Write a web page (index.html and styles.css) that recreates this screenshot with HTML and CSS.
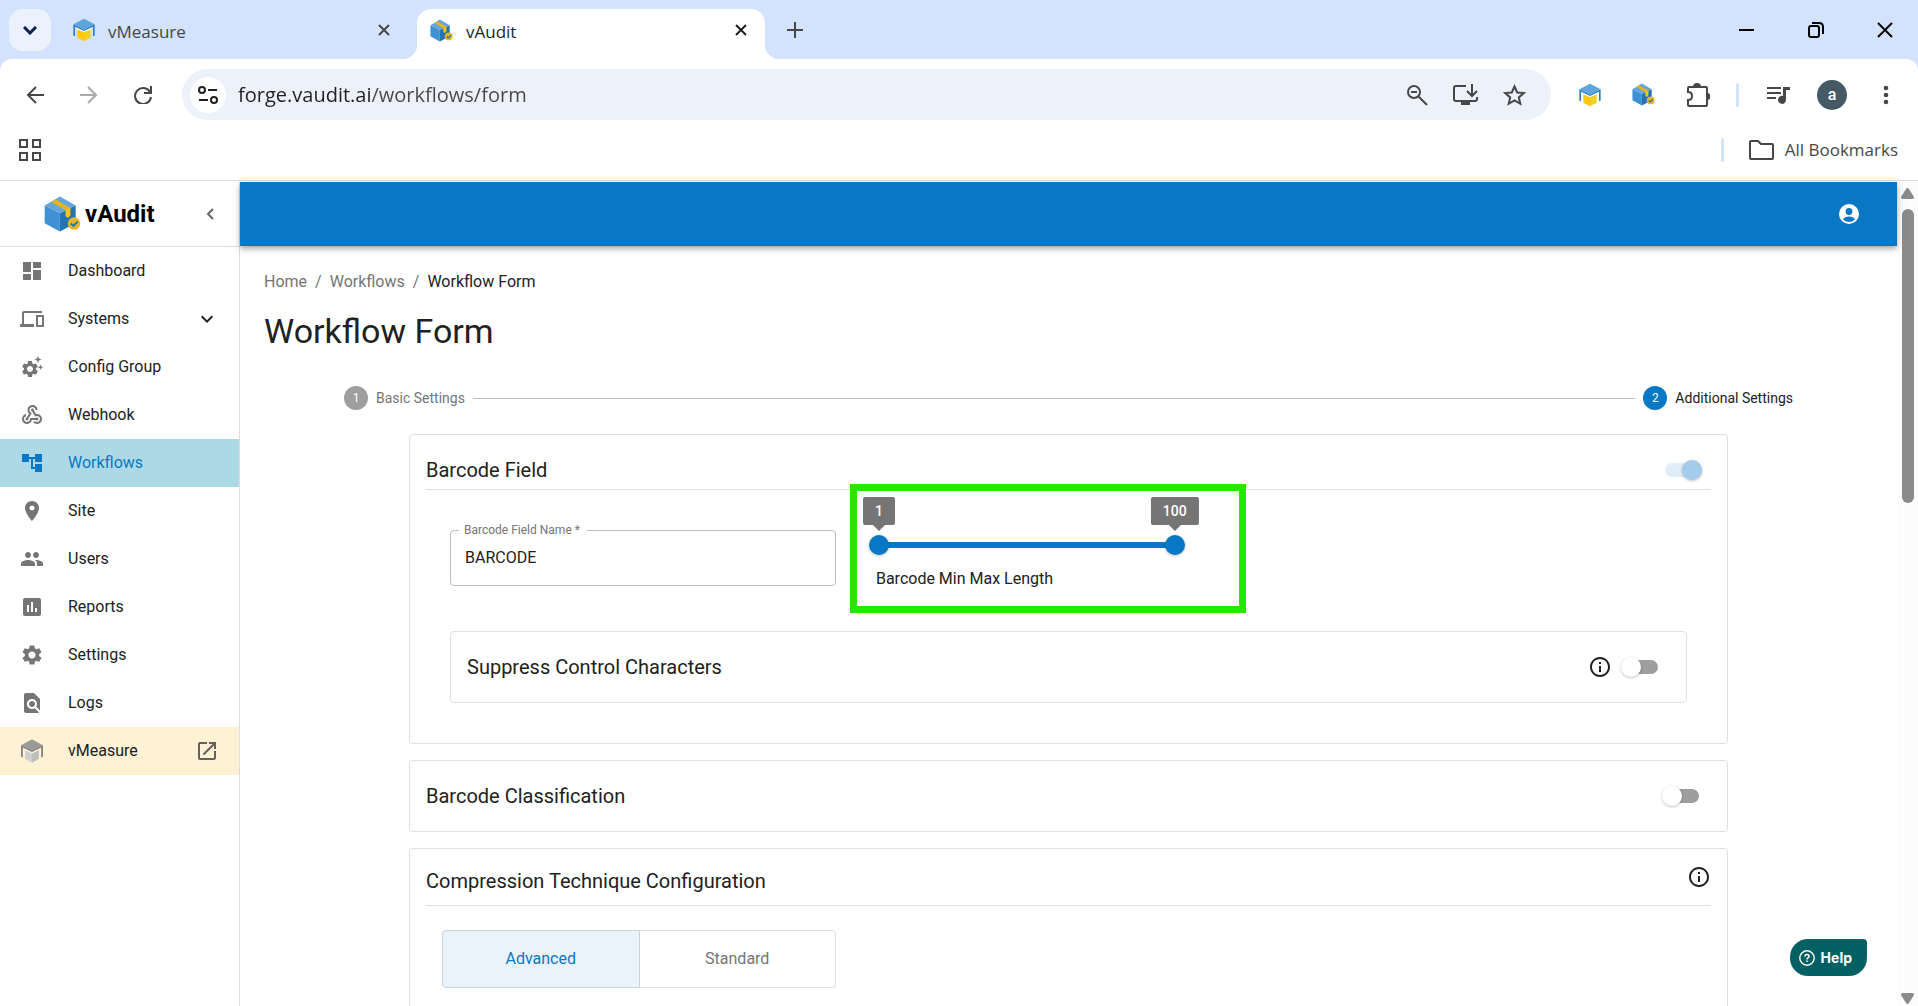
FILE: index.html
```html
<!DOCTYPE html>
<html lang="en">
<head>
<meta charset="utf-8">
<title>vAudit</title>
<link rel="stylesheet" href="styles.css">
</head>
<body>
<svg class="sprite" aria-hidden="true">
  <symbol id="logo-measure" viewBox="0 0 66 70">
    <path fill="#fff" d="M12 29h42v6L33 44 12 36z"/>
    <path fill="#2f80c3" d="M1 18l32 15 32-15v34l-5 2V25L33 38 6 25v29l-5-2z"/>
    <path fill="#5fa5dc" d="M33 1 65 18 33 35 1 18z"/>
    <path fill="#fcc90f" d="M13 33l20 9v27L13 58z"/>
    <path fill="#f0d21c" d="M53 33l-20 9v27l20-11z"/>
  </symbol>
  <symbol id="logo-measure-gray" viewBox="0 0 66 70">
    <path fill="#7d7d7d" d="M1 18l32 15 32-15v34l-5 2V25L33 38 6 25v29l-5-2z"/>
    <path fill="#9a9a9a" d="M33 1 65 18 33 35 1 18z"/>
    <path fill="#cfcfcf" d="M13 33l20 9v27L13 58z"/>
    <path fill="#bdbdbd" d="M53 33l-20 9v27l20-11z"/>
  </symbol>
  <symbol id="logo-audit" viewBox="0 0 112 108">
    <path fill="#62a6dd" d="M48 1l48 27-48 24L2 28z"/>
    <path fill="#4090d4" d="M2 28l46 24v55L2 82z"/>
    <path fill="#2373b5" d="M96 28 48 52v55l48-25z"/>
    <path fill="#e3b325" d="M35 9 21 17l44 26 15-7z"/>
    <path fill="#f8c50e" d="M65 43l15-8v23l-7 8-8-5z"/>
    <circle cx="91" cy="83" r="19" fill="#e7b725"/>
    <path fill="none" stroke="#2373b5" stroke-width="6" d="M81 83l8 7 13-13"/>
  </symbol>
  <symbol id="close" viewBox="0 0 12 12"><path fill="none" stroke="currentColor" stroke-width="2" d="M1 1l10 10M11 1 1 11"/></symbol>
  <symbol id="info" viewBox="0 0 24 24"><path fill="currentColor" d="M11 7h2v2h-2zm0 4h2v6h-2zm1-9C6.480 2 2 6.480 2 12s4.480 10 10 10 10-4.480 10-10S17.520 2 12 2zm0 18c-4.410 0-8-3.590-8-8s3.590-8 8-8 8 3.590 8 8-3.590 8-8 8z"/></symbol>
  <symbol id="gear" viewBox="0 0 24 24"><path fill="currentColor" d="M19.140 12.940c.04-.3.06-.61.06-.94 0-.32-.02-.64-.07-.94l2.030-1.580c.18-.14.23-.41.12-.61l-1.920-3.320c-.12-.22-.37-.29-.59-.22l-2.390.96c-.5-.38-1.030-.7-1.620-.94l-.36-2.540c-.04-.24-.24-.41-.48-.41h-3.840c-.24 0-.43.17-.47.41l-.36 2.540c-.59.24-1.130.57-1.620.94l-2.390-.96c-.22-.08-.47 0-.59.22L2.740 8.870c-.12.21-.08.47.12.61l2.030 1.580c-.05.3-.09.63-.09.94s.02.64.07.94l-2.030 1.580c-.18.14-.23.41-.12.61l1.920 3.320c.12.22.37.29.59.22l2.390-.96c.5.38 1.030.7 1.620.94l.36 2.540c.05.24.24.41.48.41h3.840c.24 0 .44-.17.47-.41l.36-2.540c.59-.24 1.130-.56 1.620-.94l2.390.96c.22.08.47 0 .59-.22l1.920-3.320c.12-.22.07-.47-.12-.61l-2.010-1.580zM12 15.600c-1.980 0-3.600-1.620-3.600-3.600s1.620-3.600 3.600-3.600 3.600 1.620 3.600 3.600-1.620 3.600-3.600 3.600z"/></symbol>
</svg>

<header class="browser">
  <div class="tabstrip">
    <button class="tab-search" aria-label="Search tabs"><svg width="14" height="9" viewBox="0 0 14 9"><path fill="none" stroke="#0b1f4b" stroke-width="3" d="M1 1l6 6 6-6"/></svg></button>
    <div class="tab">
      <svg width="22" height="24"><use href="#logo-measure"/></svg>
      <span class="tab-title">vMeasure</span>
      <button class="plain" aria-label="Close vMeasure"><svg width="12" height="12"><use href="#close"/></svg></button>
    </div>
    <div class="tab tab-active">
      <svg width="23" height="23"><use href="#logo-audit"/></svg>
      <span class="tab-title">vAudit</span>
      <button class="plain" aria-label="Close vAudit"><svg width="12" height="12"><use href="#close"/></svg></button>
    </div>
    <button class="plain new-tab" aria-label="New tab"><svg width="16" height="16" viewBox="0 0 16 16"><path stroke="#474747" stroke-width="2" d="M8 0v16M0 8h16"/></svg></button>
    <div class="window-controls">
      <button class="plain" aria-label="Minimize"><svg width="16" height="16" viewBox="0 0 16 16"><path stroke="#000" stroke-width="2" d="M0 8h15"/></svg></button>
      <button class="plain" aria-label="Restore"><svg width="16" height="16" viewBox="0 0 16 16"><g fill="none" stroke="#000" stroke-width="2"><rect x="1" y="4" width="10" height="11" rx="2"/><path d="M4 1h7q4 0 4 4v7"/></g></svg></button>
      <button class="plain" aria-label="Close"><svg width="16" height="16" viewBox="0 0 16 16"><path stroke="#000" stroke-width="2" d="M1 1l14 14M15 1 1 15"/></svg></button>
    </div>
  </div>

  <div class="toolbar">
    <div class="nav-buttons">
      <button class="plain" aria-label="Back"><svg width="18" height="18" viewBox="0 0 18 18"><path fill="none" stroke="#474747" stroke-width="2" d="M18 9H2M10 1 2 9l8 8"/></svg></button>
      <button class="plain" aria-label="Forward"><svg width="18" height="18" viewBox="0 0 18 18"><path fill="none" stroke="#a9a9a9" stroke-width="2" d="M0 9h16M8 1l8 8-8 8"/></svg></button>
      <button class="plain" aria-label="Reload"><svg width="18" height="18" viewBox="0 0 18 18"><path fill="none" stroke="#474747" stroke-width="2" d="M17 0v7h-7M16 6A8 8 0 1 0 17 11"/></svg></button>
    </div>
    <div class="address">
      <button class="site-info" aria-label="Site information"><svg width="20" height="18" viewBox="0 0 20 18"><g fill="none" stroke="#1f1f1f" stroke-width="2"><circle cx="4" cy="4" r="3"/><path d="M10 4h9M1 14h9"/><circle cx="16" cy="14" r="3"/></g></svg></button>
      <input class="url" type="text" aria-label="Address" value="forge.vaudit.ai/workflows/form">
      <button class="plain" aria-label="Zoom"><svg width="22" height="22" viewBox="0 0 22 22"><g fill="none" stroke="#474747" stroke-width="2"><circle cx="8" cy="8" r="6"/><path d="M5 8h6M12 12l9 9"/></g></svg></button>
      <button class="plain" aria-label="Install app"><svg width="25" height="22" viewBox="0 0 25 22"><path fill="none" stroke="#474747" stroke-width="2" d="M13 2H3q-2 0-2 2v11q0 2 2 2h19q2 0 2-2v-2M19 0v11M14 7l5 5 5-5"/><path fill="#474747" d="M8 17h9v4H8z"/></svg></button>
      <button class="plain" aria-label="Bookmark this page"><svg width="23" height="22" viewBox="0 0 23 22"><path fill="none" stroke="#474747" stroke-width="2" d="M11.500 2.500l2.700 6 6.600.6-5 4.300 1.500 6.400-5.800-3.400-5.800 3.400 1.500-6.400-5-4.300 6.600-.6z"/></svg></button>
    </div>
    <div class="extensions">
      <button class="plain" aria-label="vMeasure"><svg width="22" height="24"><use href="#logo-measure"/></svg></button>
      <button class="plain" aria-label="vAudit"><svg width="23" height="23"><use href="#logo-audit"/></svg></button>
      <button class="plain" aria-label="Extensions"><svg width="24" height="24" viewBox="0 0 24 24"><path fill="none" stroke="#474747" stroke-width="2" d="M3 4h17q1 0 1 1v17q0 1-1 1H3q-1 0-1-1v-5q4 0 4-4T2 9V5q0-1 1-1z"/><path fill="#474747" d="M7 4a4 4 0 0 1 8 0zM21 10a3 3 0 0 1 0 7z"/></svg></button>
    </div>
    <span class="divider"></span>
    <button class="plain" aria-label="Media"><svg width="23" height="18" viewBox="0 0 23 18"><path stroke="#474747" stroke-width="2" d="M0 2h14M0 7h14M0 12h9"/><path fill="#474747" d="M16 1h7v3h-4v10a4 4 0 1 1-3-4z"/></svg></button>
    <button class="avatar" aria-label="Profile">a</button>
    <button class="plain" aria-label="Menu"><svg width="6" height="20" viewBox="0 0 6 20"><g fill="#474747"><circle cx="3" cy="3" r="2.300"/><circle cx="3" cy="10" r="2.300"/><circle cx="3" cy="17" r="2.300"/></g></svg></button>
  </div>

  <div class="bookmarks">
    <button class="plain" aria-label="Apps"><svg width="22" height="22" viewBox="0 0 22 22"><path fill="none" stroke="#474747" stroke-width="2" d="M1 1h7v7H1zM14 1h7v7h-7zM1 14h7v7H1zM14 14h7v7h-7z"/></svg></button>
    <span class="divider"></span>
    <button class="all-bookmarks"><svg width="25" height="20" viewBox="0 0 25 20"><path fill="none" stroke="#474747" stroke-width="2" d="M2 1h7l3 3h11q1 0 1 1v13q0 1-1 1H2q-1 0-1-1V2q0-1 1-1z"/></svg>All Bookmarks</button>
  </div>
</header>

<div class="app">
  <aside class="sidebar">
    <div class="brand">
      <svg width="37" height="36"><use href="#logo-audit"/></svg>
      <span class="brand-name">vAudit</span>
      <button class="plain" aria-label="Collapse sidebar"><svg width="8" height="12" viewBox="0 0 8 12"><path fill="none" stroke="#666" stroke-width="2" d="M7 1 2 6l5 5"/></svg></button>
    </div>
    <nav class="menu">
      <a href="#"><svg viewBox="0 0 24 24"><path d="M3 13h8V3H3v10zm0 8h8v-6H3v6zm10 0h8V11h-8v10zm0-18v6h8V3h-8z"/></svg><span>Dashboard</span></a>
      <a href="#"><svg viewBox="0 0 24 24"><path d="M4 6h18V4H4c-1.100 0-2 .9-2 2v11H0v3h14v-3H4V6zm19 2h-6c-.55 0-1 .45-1 1v10c0 .55.45 1 1 1h6c.55 0 1-.45 1-1V9c0-.55-.45-1-1-1zm-1 10h-4v-8h4v8z"/></svg><span>Systems</span><svg class="trail dark" viewBox="0 0 24 24"><path d="M7.410 8.590 12 13.170l4.590-4.580L18 10l-6 6-6-6z"/></svg></a>
      <a href="#"><svg viewBox="0 0 24 24"><use href="#gear" x="0" y="4" width="20" height="20"/><path d="M18 1l1 2.500 2.500 1-2.500 1-1 2.500-1-2.500-2.500-1 2.500-1zM20.500 9.500l.8 2 2 .8-2 .8-.8 2-.8-2-2-.8 2-.8z"/></svg><span>Config Group</span></a>
      <a href="#"><svg viewBox="0 0 24 24"><path d="M10 15h5.880c.27-.31.67-.5 1.120-.5.83 0 1.500.67 1.500 1.500s-.67 1.500-1.500 1.500c-.44 0-.84-.19-1.120-.5H11.900c-.46 2.280-2.480 4-4.900 4-2.760 0-5-2.240-5-5 0-2.420 1.720-4.440 4-4.900v2.070c-1.160.41-2 1.530-2 2.830 0 1.650 1.350 3 3 3s3-1.350 3-3v-1zm2.500-11c1.650 0 3 1.350 3 3h2c0-2.760-2.240-5-5-5s-5 2.240-5 5c0 1.430.6 2.710 1.550 3.620l-2.350 3.900c-.68.14-1.200.75-1.200 1.480 0 .83.67 1.500 1.500 1.500s1.500-.67 1.500-1.500c0-.16-.02-.31-.07-.45l3.380-5.630C10.490 9.610 9.500 8.420 9.500 7c0-1.650 1.350-3 3-3zm4.500 9c-.64 0-1.230.2-1.720.54l-3.050-5.070C11.530 8.350 11 7.740 11 7c0-.83.67-1.500 1.500-1.500S14 6.170 14 7c0 .15-.02.29-.06.43l2.190 3.650c.28-.05.57-.08.87-.08 2.760 0 5 2.240 5 5s-2.240 5-5 5c-1.850 0-3.470-1.010-4.330-2.500h2.670c.48.32 1.050.5 1.660.5 1.650 0 3-1.350 3-3s-1.350-3-3-3z"/></svg><span>Webhook</span></a>
      <a href="#" class="active" aria-current="page"><svg viewBox="0 0 24 24"><path d="M22 11V3h-7v3H9V3H2v8h7V8h2v10h4v3h7v-8h-7v3h-2V8h2v3z"/></svg><span>Workflows</span></a>
      <a href="#"><svg viewBox="0 0 24 24"><path d="M12 2C8.130 2 5 5.130 5 9c0 5.250 7 13 7 13s7-7.750 7-13c0-3.870-3.130-7-7-7zm0 9.500c-1.380 0-2.500-1.120-2.500-2.500s1.120-2.500 2.500-2.500 2.500 1.120 2.500 2.500-1.120 2.500-2.500 2.500z"/></svg><span>Site</span></a>
      <a href="#"><svg viewBox="0 0 24 24"><path d="M16 11c1.660 0 2.990-1.340 2.990-3S17.660 5 16 5c-1.660 0-3 1.340-3 3s1.340 3 3 3zm-8 0c1.660 0 2.990-1.340 2.990-3S9.660 5 8 5C6.340 5 5 6.340 5 8s1.340 3 3 3zm0 2c-2.330 0-7 1.170-7 3.500V19h14v-2.500c0-2.330-4.670-3.500-7-3.500zm8 0c-.29 0-.62.02-.97.05 1.160.84 1.970 1.970 1.970 3.450V19h6v-2.500c0-2.330-4.670-3.500-7-3.500z"/></svg><span>Users</span></a>
      <a href="#"><svg viewBox="0 0 24 24"><path d="M19 3H5c-1.100 0-2 .9-2 2v14c0 1.100.9 2 2 2h14c1.100 0 2-.9 2-2V5c0-1.100-.9-2-2-2zM9 17H7v-7h2v7zm4 0h-2V7h2v10zm4 0h-2v-4h2v4z"/></svg><span>Reports</span></a>
      <a href="#"><svg viewBox="0 0 24 24"><use href="#gear"/></svg><span>Settings</span></a>
      <a href="#"><svg viewBox="0 0 24 24"><path d="M20 19.590V8l-6-6H6c-1.100 0-1.990.9-1.990 2L4 20c0 1.100.89 2 1.990 2H18c.45 0 .85-.15 1.190-.4l-4.430-4.430c-.8.52-1.740.83-2.760.83-2.760 0-5-2.240-5-5s2.240-5 5-5 5 2.240 5 5c0 1.020-.31 1.960-.83 2.750L20 19.590zM9 13c0 1.660 1.340 3 3 3s3-1.340 3-3-1.340-3-3-3-3 1.340-3 3z"/></svg><span>Logs</span></a>
      <a href="#" class="external"><svg><use href="#logo-measure-gray"/></svg><span>vMeasure</span><svg class="trail" viewBox="0 0 24 24"><path d="M19 19H5V5h7V3H5c-1.110 0-2 .9-2 2v14c0 1.100.89 2 2 2h14c1.100 0 2-.9 2-2v-7h-2v7zM14 3v2h3.590l-9.830 9.830 1.410 1.410L19 6.410V10h2V3h-7z"/></svg></a>
    </nav>
  </aside>

  <div class="page">
    <div class="appbar">
      <button class="plain" aria-label="Account"><svg width="24" height="24" viewBox="0 0 24 24"><circle cx="12" cy="12" r="10" fill="#fff"/><circle cx="12" cy="9.500" r="3.400" fill="#0878c5"/><path fill="#0878c5" d="M6 17.300c1.500-2 3.500-2.700 6-2.700s4.500.7 6 2.700c-1.500 1.700-3.500 2.700-6 2.700s-4.500-1-6-2.700z"/></svg></button>
    </div>
    <main class="content">
      <nav class="crumbs" aria-label="Breadcrumb">
        <a href="#">Home</a><span>/</span><a href="#">Workflows</a><span>/</span><span class="current">Workflow Form</span>
      </nav>
      <h1>Workflow Form</h1>

      <ol class="stepper">
        <li><span class="step-num">1</span>Basic Settings</li>
        <li class="line" aria-hidden="true"></li>
        <li class="step-active"><span class="step-num">2</span>Additional Settings</li>
      </ol>

      <section class="card">
        <div class="card-head ruled">
          <h2 id="t-barcode">Barcode Field</h2>
          <input class="switch" type="checkbox" role="switch" aria-labelledby="t-barcode" checked disabled>
        </div>
        <div class="card-body">
          <div class="field-row">
            <div class="field">
              <label for="field-name">Barcode Field Name *</label>
              <input id="field-name" type="text" value="BARCODE">
            </div>
            <div class="length">
              <div class="slider">
                <output class="bubble bubble-min">1</output>
                <output class="bubble bubble-max">100</output>
                <input type="range" min="1" max="100" value="1" aria-label="Minimum length">
                <input type="range" min="1" max="100" value="100" aria-label="Maximum length">
              </div>
              <p>Barcode Min Max Length</p>
              <span class="highlight"></span>
            </div>
          </div>
          <div class="subcard card-head">
            <h2 id="t-suppress">Suppress Control Characters</h2>
            <button class="plain info" aria-label="About suppress control characters"><svg width="24" height="24"><use href="#info"/></svg></button>
            <input class="switch" type="checkbox" role="switch" aria-labelledby="t-suppress">
          </div>
        </div>
      </section>

      <section class="card">
        <div class="card-head">
          <h2 id="t-class">Barcode Classification</h2>
          <input class="switch" type="checkbox" role="switch" aria-labelledby="t-class">
        </div>
      </section>

      <section class="card">
        <div class="card-head ruled top">
          <h2>Compression Technique Configuration</h2>
          <button class="plain info" aria-label="About compression technique"><svg width="24" height="24"><use href="#info"/></svg></button>
        </div>
        <div class="toggle">
          <button class="selected" aria-pressed="true">Advanced</button>
          <button aria-pressed="false">Standard</button>
        </div>
      </section>
    </main>
    <button class="help"><svg width="16" height="16" viewBox="0 0 16 16"><g fill="none" stroke="#fff"><circle cx="8" cy="8" r="7.200" stroke-width="1.400"/><path stroke-width="1.500" d="M6 6.500q0-2 2-2t2 1.800q0 1.100-1.100 1.600Q8 8.400 8 9.500M8 10.500V12"/></g></svg>Help</button>
  </div>

  <div class="scrollbar" aria-hidden="true">
    <svg width="13" height="11" viewBox="0 0 13 11"><path fill="#8b8b8b" d="M5 1q1.500-2 3 0l5 8q0 2-1.500 2h-10Q0 11 0 9z"/></svg>
    <span class="track"><span class="thumb"></span></span>
    <svg width="13" height="11" viewBox="0 0 13 11"><path fill="#8b8b8b" d="M5 10q1.500 2 3 0l5-8q0-2-1.500-2h-10Q0 0 0 2z"/></svg>
  </div>
</div>
</body>
</html>
```
FILE: styles.css
```css
* { box-sizing: border-box; }

body {
  margin: 0;
  height: 100vh;
  display: flex;
  flex-direction: column;
  overflow: hidden;
  background: #fff;
  color: #212121;
  font-family: Roboto, "Liberation Sans", sans-serif;
  font-size: 16px;
  line-height: 24px;
}

h1, h2, p, ol { margin: 0; padding: 0; font-weight: 400; }
a { color: inherit; text-decoration: none; }
button { font: inherit; color: inherit; cursor: pointer; }
svg { display: block; flex: none; }
.sprite { display: none; }

.plain {
  display: flex;
  padding: 0;
  border: 0;
  background: none;
}

/* Browser window */
.browser {
  flex: none;
  background: #d3e3fd;
  border-bottom: 1px solid #dddddd;
  color: #474747;
  font-family: "Open Sans", "Noto Sans", sans-serif;
}

.tabstrip {
  display: flex;
  align-items: center;
  height: 59px;
  padding: 9px 25px 0 9px;
}

.tab-search {
  display: grid;
  place-items: center;
  align-self: flex-start;
  width: 42px;
  height: 42px;
  border: 0;
  border-radius: 14px;
  background: #ebf2fe;
}

.tab {
  position: relative;
  display: flex;
  align-items: center;
  gap: 13px;
  width: 348px;
  height: 50px;
  margin: 0 9px;
  padding: 0 18px 8px 13px;
  border-radius: 14px 14px 0 0;
  font-size: 17px;
}

.tab-title { flex: 1; padding-top: 4px; }
.tab .plain { margin-left: auto; }

.tab-active {
  margin: 0;
  background: #fff;
  color: #1f1f1f;
}

.tab-active::before,
.tab-active::after {
  content: "";
  position: absolute;
  bottom: 0;
  width: 14px;
  height: 14px;
}
.tab-active::before { right: 100%; background: radial-gradient(circle at 0 0, transparent 14px, #fff 14px); }
.tab-active::after { left: 100%; background: radial-gradient(circle at 100% 0, transparent 14px, #fff 14px); }

.new-tab { margin: 0 auto 8px 22px; }
.window-controls { display: flex; gap: 53px; padding-bottom: 9px; }

.toolbar {
  display: flex;
  align-items: center;
  height: 71px;
  padding: 0 29px 0 26px;
  border-radius: 12px 12px 0 0;
  background: #fff;
}

.nav-buttons { display: flex; gap: 36px; margin-right: 30px; }

.address {
  display: flex;
  flex: 1;
  align-items: center;
  gap: 25px;
  height: 51px;
  padding: 0 25px 0 8px;
  border-radius: 26px;
  background: #ecf1fa;
}

.site-info {
  display: grid;
  place-items: center;
  width: 36px;
  height: 36px;
  padding: 0;
  border: 0;
  border-radius: 50%;
  background: #fff;
}

/* The host name is darker than the path */
.url {
  flex: 1;
  min-width: 0;
  margin-left: -13px;
  padding: 0;
  border: 0;
  background: linear-gradient(90deg, #1f1f1f 132px, #474747 132px);
  background-clip: text;
  color: transparent;
  font: 20px/28px "Open Sans", "Noto Sans", sans-serif;
}

.extensions { display: flex; align-items: center; gap: 31px; margin: 0 26px 0 28px; }
.divider { width: 3px; height: 24px; border-radius: 2px; background: #d3e3fd; }
.toolbar .divider { margin-right: 28px; }

.avatar {
  width: 30px;
  height: 30px;
  margin: 0 36px 0 27px;
  padding: 0;
  border: 0;
  border-radius: 50%;
  background: #455a64;
  color: #fff;
  font: 500 16px/28px Roboto, sans-serif;
}

.bookmarks {
  display: flex;
  align-items: center;
  height: 50px;
  padding: 0 20px 10px 19px;
  background: #fff;
}
.bookmarks .divider { margin: 0 25px 0 auto; }

.all-bookmarks {
  display: flex;
  align-items: center;
  gap: 11px;
  padding: 0;
  border: 0;
  background: none;
  font-size: 17px;
}

/* Application shell */
.app {
  display: flex;
  flex: 1;
  min-height: 0;
  padding-top: 1px;
}

.sidebar {
  flex: none;
  width: 240px;
  border-right: 1px solid #dddddd;
}

.brand {
  display: flex;
  align-items: center;
  height: 65px;
  padding: 0 25px 0 44px;
  border-bottom: 1px solid #dddddd;
}
.brand-name { margin-left: 4px; color: #000; font-size: 24px; font-weight: 700; }
.brand .plain { margin-left: auto; }

.menu a {
  display: flex;
  align-items: center;
  height: 48px;
  padding: 0 20px;
}
.menu svg { width: 24px; height: 24px; color: #757575; fill: currentColor; }
.menu span { margin: 0 auto 0 24px; }
.menu .trail { color: #616161; }
.menu .dark { color: #212121; }
.menu .active { background: #add8e6; color: #0878c5; }
.menu .active svg { color: #0878c5; }
.menu .external { background: #fff1d3; }

.page {
  position: relative;
  display: flex;
  flex: 1;
  flex-direction: column;
  min-width: 0;
}

.appbar {
  position: relative;
  display: flex;
  flex: none;
  align-items: center;
  justify-content: flex-end;
  height: 64px;
  padding: 0 36px;
  background: #0878c5;
  box-shadow: 0 2px 4px -1px rgba(0, 0, 0, .2), 0 4px 5px rgba(0, 0, 0, .14), 0 1px 10px rgba(0, 0, 0, .12);
}

.content {
  flex: 1;
  min-height: 0;
  overflow: hidden;
  padding: 24px;
}

.crumbs { display: flex; gap: 8px; color: #757575; }
.crumbs .current { color: #212121; }

h1 { margin-top: 16px; font-size: 34px; line-height: 42px; }
h2 { flex: 1; font-size: 20px; line-height: 32px; }

.stepper {
  display: flex;
  align-items: center;
  gap: 8px;
  margin: 34px 72px 24px;
  padding: 0 8px;
  list-style: none;
  color: #757575;
  font-size: 14px;
}
.stepper li { display: flex; align-items: center; gap: 8px; }
.stepper .line { flex: 1; height: 1px; background: #bdbdbd; }
.stepper .step-active { color: #212121; }

.step-num {
  width: 24px;
  border-radius: 50%;
  background: #9e9e9e;
  color: #fff;
  font-size: 12px;
  text-align: center;
}
.step-active .step-num { background: #0878c5; }

.card {
  margin: 0 145px 16px;
  padding: 16px;
  border: 1px solid #dfdfdf;
  border-radius: 4px;
}

.card-head { display: flex; align-items: center; }
.ruled { border-bottom: 1px solid #dfdfdf; }
.top { align-items: flex-start; padding-bottom: 8px; }
.card-body { padding: 40px 24px 24px; }

.switch {
  position: relative;
  appearance: none;
  width: 58px;
  height: 38px;
  margin: 0;
}
.switch::before,
.switch::after { content: ""; position: absolute; }
.switch::before {
  left: 12px;
  top: 12px;
  width: 34px;
  height: 14px;
  border-radius: 7px;
  background: #9e9e9e;
}
.switch::after {
  left: 9px;
  top: 9px;
  width: 20px;
  height: 20px;
  border-radius: 50%;
  background: #fff;
  box-shadow: 0 1px 3px rgba(0, 0, 0, .25);
}
.switch:checked::before { background: #e1eef8; }
.switch:checked::after { left: 29px; background: #a3cbea; }

.field-row { display: flex; gap: 14px; }

.field { position: relative; width: 31.2%; }
.field label {
  position: absolute;
  top: -8px;
  left: 9px;
  padding: 0 7px 0 5px;
  background: #fff;
  color: #757575;
  font-size: 12px;
  line-height: 16px;
}
.field input {
  width: 100%;
  height: 56px;
  padding: 0 14px 2px;
  border: 1px solid #bdbdbd;
  border-radius: 4px;
  color: inherit;
  font: inherit;
}

.length { position: relative; width: 32%; padding: 5px 61px 0 19px; }
.length p { margin: 12px 0 0 7px; }

.highlight {
  position: absolute;
  inset: -46px 0 -22px;
  border: 7px solid #28e600;
  pointer-events: none;
}

.slider { position: relative; height: 20px; }
.slider::before {
  content: "";
  position: absolute;
  inset: 7px 10px;
  background: #0878c5;
}
.slider input {
  position: absolute;
  inset: 0;
  appearance: none;
  width: 100%;
  height: 20px;
  margin: 0;
  background: none;
  pointer-events: none;
}
.slider input::-webkit-slider-thumb {
  appearance: none;
  width: 20px;
  height: 20px;
  border-radius: 50%;
  background: #0878c5;
  box-shadow: 0 1px 3px rgba(0, 0, 0, .25);
  pointer-events: auto;
}

.bubble {
  position: absolute;
  bottom: 30px;
  padding: 2px 12px;
  border-radius: 2px;
  background: #757575;
  color: #fff;
  font-size: 14px;
  font-weight: 500;
}
.bubble-min { left: 10px; transform: translateX(-50%); }
.bubble-max { right: 10px; transform: translateX(50%); }
.bubble::after {
  content: "";
  position: absolute;
  top: 100%;
  left: 50%;
  margin-left: -6px;
  border: 6px solid transparent;
  border-top-color: #757575;
  border-bottom: 0;
}

.subcard {
  margin-top: 40px;
  padding: 16px;
  border: 1px solid #dfdfdf;
  border-radius: 4px;
}

.toggle { display: flex; width: 394px; max-width: 100%; margin: 24px 16px 48px; }
.toggle button {
  flex: 1;
  height: 58px;
  border: 1px solid #dfdfdf;
  border-radius: 0 4px 4px 0;
  background: #fff;
  color: #757575;
}
.toggle .selected {
  border-color: #c9d3db;
  border-radius: 4px 0 0 4px;
  background: #eaf3fa;
  color: #0878c5;
}
.toggle button + button { border-left: 0; }

.help {
  position: absolute;
  right: 30px;
  bottom: 30px;
  display: flex;
  align-items: center;
  gap: 6px;
  height: 37px;
  padding: 0 15px 0 9px;
  border: 0;
  border-radius: 18px 4px 18px 18px;
  background: #026063;
  color: #fff;
  font: 700 14px/20px Inter, sans-serif;
}

.scrollbar {
  display: flex;
  flex: none;
  flex-direction: column;
  align-items: center;
  width: 21px;
  padding: 6px 0 2px;
  background: #fcfcfc;
}
.track { flex: 1; width: 12px; padding: 10px 0; }
.thumb { display: block; height: 38%; border-radius: 6px; background: #8b8b8b; }
```
